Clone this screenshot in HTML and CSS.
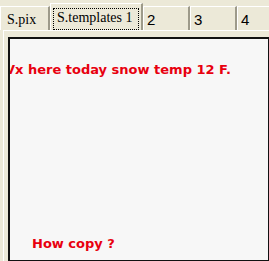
FILE: index.html
```html
<!DOCTYPE html>
<html lang="en">
<head>
	<meta charset="UTF-8">
	<title>templates</title>
	<link rel="stylesheet" href="styles.css">
</head>
<body>
	<div class="tabs">
		<div class="tab serif">S.pix</div>
		<div class="tab serif active"><span class="focus">S.templates 1</span></div>
		<div class="tab">2</div>
		<div class="tab">3</div>
		<div class="tab last">4</div>
	</div>
	<div class="panel">
		<div class="sheet">
			<p class="line first">Vx here today snow temp 12 F.</p>
			<p class="line ask">How copy ?</p>
		</div>
	</div>
</body>
</html>
```
FILE: styles.css
```css
body {
	margin: 0;
	background: #ece9d8;
	width: 269px;
	height: 261px;
	overflow: hidden;
	font-family: "Liberation Sans", Arial, sans-serif;
}

.tabs {
	display: flex;
	height: 30px;
	padding-top: 2px;
	box-sizing: border-box;
	align-items: flex-end;
}

.tab {
	height: 24px;
	width: 47px;
	box-sizing: border-box;
	border-top: 1px solid #fff;
	border-left: 1px solid #fff;
	border-right: 2px solid #9d9a8a;
	padding: 4px 0 0 3px;
	font-size: 15px;
	color: #000;
}

.tab.serif {
	font-family: "Liberation Serif", "Times New Roman", serif;
	font-size: 14px;
	width: 50px;
	padding: 5px 0 0 6px;
}

.tab.active {
	width: 93px;
	height: 27px;
	padding: 4px 2px 0 2px;
}

.tab.last {
	flex: 1;
	border-right: none;
}

.focus {
	display: block;
	border: 1px dotted #000;
	padding: 1px 2px 3px 3px;
}

.panel {
	border-top: 1px solid #fff;
	border-left: 1px solid #fff;
	margin-left: 3px;
	height: 231px;
	padding: 6px 0 0 4px;
	box-sizing: border-box;
}

.sheet {
	height: 221px;
	background: #f7f7f7;
	border: 2px solid #111;
	border-right-width: 1px;
	overflow: hidden;
}

.line {
	margin: 0;
	color: #e8000f;
	font-family: "DejaVu Sans", Verdana, sans-serif;
	font-weight: bold;
	font-size: 13px;
	line-height: 15px;
	white-space: nowrap;
}

.first {
	margin: 23px 0 0 -5px;
}

.ask {
	margin: 159px 0 0 22px;
}
```
